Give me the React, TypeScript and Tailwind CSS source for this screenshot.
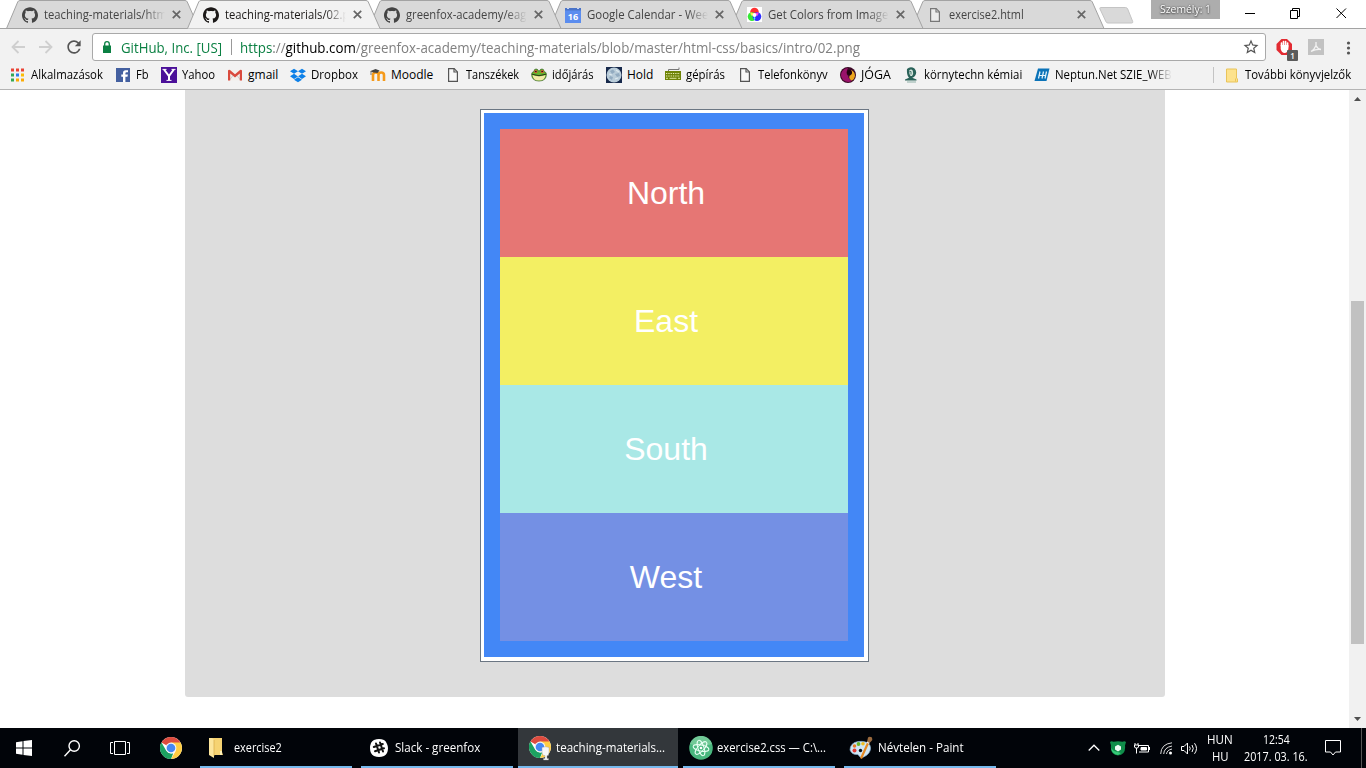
import { useLayoutEffect, useRef, type ReactNode } from "react";
import { SiGithub } from "react-icons/si";
import { FaDropbox } from "react-icons/fa";
import { MdRefresh, MdStarBorder } from "react-icons/md";

/* A single line of text condensed or widened to fill a given width. */
function Line({ w, className = "", children }: { w: number; className?: string; children: ReactNode }) {
  const ref = useRef<HTMLSpanElement>(null);
  useLayoutEffect(() => {
    const el = ref.current;
    if (!el) return;
    el.style.transform = `scaleX(${w / el.offsetWidth})`;
  }, [w]);
  return (
    <span className={`block shrink-0 ${className}`} style={{ width: w }}>
      <span ref={ref} className="inline-block origin-left whitespace-pre">
        {children}
      </span>
    </span>
  );
}

const DocIcon = ({ color = "#555" }: { color?: string }) => (
  <svg width="16" height="16" viewBox="0 0 16 16" fill="#fff" fillOpacity=".5" stroke={color} strokeWidth="1.2">
    <path d="M3.6 1.6h5.6l3.2 3.3v9.5H3.6z" />
    <path d="M9 1.6V5h3.4" fill="none" />
  </svg>
);

const CalendarIcon = () => (
  <svg width="16" height="16" viewBox="0 0 16 16">
    <path d="M0 2h16v14H0z" fill="#5b8def" />
    <path d="M0 1h16v2.500H0z" fill="#4a74c9" />
    <path d="M2 .5h2v1.500H2zM12 .5h2v1.500h-2z" fill="#c7d4ee" />
    <text x="8" y="12.6" textAnchor="middle" fontSize="9" fontWeight="700" fill="#fff" fontFamily="Open Sans, sans-serif">16</text>
  </svg>
);

const ColorsIcon = () => (
  <svg width="15" height="15" viewBox="0 0 15 15" className="ml-px">
    <path d="M0 0h15v15H0z" fill="#fff" />
    <circle cx="7.500" cy="5" r="4.300" fill="#ff3030" />
    <circle cx="5" cy="9.600" r="4.300" fill="#35e835" />
    <circle cx="10" cy="9.600" r="4.300" fill="#3030ff" />
    <path d="M3.300 5.600q2.100-.8 4.200 1.500L4.800 8.900Q3.200 7.400 3.300 5.600z" fill="#ffe94a" />
    <path d="M11.700 5.600q-2.100-.8-4.200 1.500l2.700 1.800q1.600-1.500 1.500-3.300z" fill="#ff40e8" />
    <path d="M7.500 9.500q1.800 1.800 0 3.700-1.800-1.900 0-3.700z" fill="#40f0ff" />
    <circle cx="7.500" cy="8" r="2" fill="#fff" />
  </svg>
);

const tabs = [
  { icon: <SiGithub size={16} />, title: "teaching-materials/htm", w: 123 },
  { icon: <SiGithub size={16} />, title: "teaching-materials/02.p", w: 124, active: true },
  { icon: <SiGithub size={16} />, title: "greenfox-academy/eag", w: 120 },
  { icon: <CalendarIcon />, title: "Google Calendar - Wee", w: 121 },
  { icon: <ColorsIcon />, title: "Get Colors from Image", w: 120 },
  { icon: <DocIcon color="#777" />, title: "exercise2.html", w: 75 },
];
const layers = ["z-[6]", "z-[10]", "z-[5]", "z-[4]", "z-[3]", "z-[2]"];

function Tab({ index }: { index: number }) {
  const t = tabs[index];
  return (
    <div className={`relative h-[29px] w-[181px] shrink-0 ${layers[index]}`}>
      <svg className="absolute left-0 top-0" width="194" height="29" viewBox="0 0 194 29">
        <path d="M.5 28.500L11.700 2Q12.300 .5 14 .5H179Q180.700 .5 181.300 2L193 28.500z" fill={t.active ? "#f2f2f2" : "#d9d9d9"} />
        <path d="M.5 28.500L11.700 2Q12.300 .5 14 .5H179Q180.700 .5 181.300 2L193 28.500" fill="none" stroke="#a3a3a3" />
        {!t.active && <path d="M0 28.500H194" stroke="#a3a3a3" />}
      </svg>
      <div className={`relative flex h-[29px] items-center pl-4 ${t.active ? "text-[#1b1817]" : "text-[#444]"}`}>
        <span className="flex w-[22px] shrink-0">{t.icon}</span>
        <span
          className={`flex w-[121px] overflow-hidden ${
            index === 5 ? "" : "[mask-image:linear-gradient(to_right,#000_100px,transparent_121px)]"
          }`}
        >
          <Line w={t.w}>{t.title}</Line>
        </span>
        <svg className="ml-[7px] shrink-0" width="9" height="9" viewBox="0 0 9 9" stroke="#666" strokeWidth="1.700">
          <path d="M.8.8l7.400 7.400M8.200.8L.8 8.200" />
        </svg>
      </div>
    </div>
  );
}

const AppsIcon = () => (
  <svg width="16" height="16" viewBox="0 0 16 16">
    <path d="M1 1.500h3v3H1zM6 1.500h3v3H6zM11 1.500h3v3h-3z" fill="#ea4335" />
    <path d="M1 6.500h3v3H1z" fill="#34a853" />
    <path d="M6 6.500h3v3H6z" fill="#2f7de9" />
    <path d="M11 6.500h3v3h-3z" fill="#fbbc05" />
    <path d="M1 11.500h3v3H1z" fill="#34a853" />
    <path d="M6 11.500h3v3H6zM11 11.500h3v3h-3z" fill="#fbab05" />
  </svg>
);
const FacebookIcon = () => (
  <svg width="16" height="16" viewBox="0 0 16 16">
    <path d="M1 1h14v14H1z" fill="#4460a0" />
    <path d="M8 15V9.700H6.300V7.500H8V6q0-2.800 2.700-2.800H13v2.100h-1.500q-1.100 0-1.100 1v1.200h2.500l-.4 2.200h-2.100V15z" fill="#fff" />
  </svg>
);
const YahooIcon = () => (
  <svg width="16" height="16" viewBox="0 0 16 16">
    <path d="M0 0h16v16H0z" fill="#4b1099" />
    <path d="M3 2.500l5 6.500 4.800-6.500M8 8.500V13" stroke="#fff" strokeWidth="2" fill="none" />
    <path d="M1.500 2.400h4M10.500 2.400h4M5.500 13.400h5" stroke="#fff" strokeWidth="1" />
  </svg>
);
const GmailIcon = () => (
  <svg width="16" height="16" viewBox="0 0 16 16">
    <path d="M2 3h12v10.500H2z" fill="#f3f0ec" />
    <path d="M2.500 13L6 8.500M13.500 13L10 8.500" stroke="#ccc" />
    <path d="M1 3.500v10h2.200V6.500L8 10.500l4.800-4v7H15v-10q-.8-1.200-2-.4L8 7.300 3 3.100q-1.200-.8-2 .4z" fill="#d94a3d" />
  </svg>
);
const MoodleIcon = () => (
  <svg width="16" height="16" viewBox="0 0 16 16">
    <path d="M3 14V8q0-2.500 2.800-2.500T8.500 8v6M8.500 8q0-2.500 2.700-2.500T14 8v6" fill="none" stroke="#f59a1b" strokeWidth="2.600" />
    <path d="M0 4.300L5.500 2l4 1.600-2 2.400-4-.6z" fill="#444" />
    <path d="M1 4.500v3.500" stroke="#555" strokeWidth=".8" />
  </svg>
);
const FrogIcon = () => (
  <svg width="16" height="16" viewBox="0 0 16 16">
    <path d="M.6 7Q.8 5 3 4.500 3 2 5 2t2.500 2h1Q9 2 11 2t2 2.500q2.200.5 2.400 2.500 0 7-7.400 7T.6 7z" fill="#66b52d" stroke="#315c18" strokeWidth=".7" />
    <path d="M1.500 8q6.500 2.600 13 0-.5 5.500-6.500 5.500T1.500 8z" fill="#f4eaa8" />
    <path d="M1 7.200q7 3 14 0" stroke="#2c3819" fill="none" />
    <circle cx="4.800" cy="4.500" r="1.500" fill="#e34b2c" />
    <circle cx="11.200" cy="4.500" r="1.500" fill="#e34b2c" />
    <path d="M4 4.500h1.600M10.400 4.500H12" stroke="#222" />
  </svg>
);
const MoonIcon = () => (
  <svg width="16" height="16" viewBox="0 0 16 16">
    <path d="M0 0h16v16H0z" fill="#17294b" />
    <circle cx="8" cy="8" r="7.500" fill="#b9ccd9" />
    <path d="M4 4l3-1.500L9 5 6 7zM9 7l4-1 1 3-3 1zM4 9l3 1-1 3-3-2z" fill="#92abc0" />
    <path d="M10 3l3 2M3 7l3 1M9 12l3-1" stroke="#dce8ee" strokeWidth="1.200" />
  </svg>
);
const KeyboardIcon = () => (
  <svg width="16" height="16" viewBox="0 0 16 16">
    <path d="M3.500 4V2.500H14V.5" fill="none" stroke="#777" />
    <path d="M0 4h16v9H0z" fill="#6f8407" />
    <path d="M1 6.500h14M1 9h14" stroke="#e8eeb5" strokeWidth="1.200" strokeDasharray="1.300 1" />
    <path d="M1 11.300h2M4.500 11.300h7M13 11.300h2" stroke="#dfe89e" />
  </svg>
);
const YogaIcon = () => (
  <svg width="16" height="16" viewBox="0 0 16 16">
    <circle cx="8" cy="8" r="8" fill="#3b0926" />
    <path d="M8 1a7 7 0 104 12.800Q8 12 8.200 9 5 6.500 8 1z" fill="#9a126b" />
    <path d="M11 3q4 1.500 4 6-1 4-3.500 4.500-3-2-2-4.500 3-2 1.500-6z" fill="#eca51d" />
    <circle cx="9.500" cy="5.500" r="2.500" fill="#21040f" />
  </svg>
);
const ChemIcon = () => (
  <svg width="16" height="16" viewBox="0 0 16 16">
    <path d="M4 2q3.500-3 7.500-.5 3 3.500.7 7-1 2-3 2.300l4.300 1.700v1H2v-1l4-1.700Q3.500 8.500 4 2z" fill="#2a6259" />
    <path d="M6.200 3.500q2-2 3.600.2 1 3-.8 5.300H7.500Q6 7 6.200 3.500z" fill="#d7e6df" />
    <path d="M4 15h9" stroke="#8fb0a8" />
    <path d="M6.500 4.500h1.500v3" stroke="#47786e" fill="none" />
  </svg>
);
const NeptunIcon = () => (
  <svg width="16" height="16" viewBox="0 0 16 16">
    <path d="M4 1.500h11.500L12.500 14H.5z" fill="#0b73b8" />
    <path d="M4.500 11.500l1.500-7M8 11.500l1.500-7M11 11.500l1.500-7M5.500 8.500h6" stroke="#e4f4fc" strokeWidth="1.200" fill="none" />
  </svg>
);

const bookmarks: { icon: ReactNode; label: string; w: number; cell: string }[] = [
  { icon: <AppsIcon />, label: "Alkalmazások", w: 72, cell: "w-[105px]" },
  { icon: <FacebookIcon />, label: "Fb", w: 13, cell: "w-[46px]" },
  { icon: <YahooIcon />, label: "Yahoo", w: 33, cell: "w-[66px]" },
  { icon: <GmailIcon />, label: "gmail", w: 30, cell: "w-[63px]" },
  { icon: <FaDropbox size={17} color="#0d80e8" />, label: "Dropbox", w: 47, cell: "w-20" },
  { icon: <MoodleIcon />, label: "Moodle", w: 42, cell: "w-[75px]" },
  { icon: <DocIcon />, label: "Tanszékek", w: 53, cell: "w-[86px]" },
  { icon: <FrogIcon />, label: "időjárás", w: 42, cell: "w-[75px]" },
  { icon: <MoonIcon />, label: "Hold", w: 26, cell: "w-[59px]" },
  { icon: <KeyboardIcon />, label: "gépírás", w: 39, cell: "w-[72px]" },
  { icon: <DocIcon />, label: "Telefonkönyv", w: 70, cell: "w-[103px]" },
  { icon: <YogaIcon />, label: "JÓGA", w: 30, cell: "w-[63px]" },
  { icon: <ChemIcon />, label: "környtechn kémiai", w: 98, cell: "w-[131px]" },
  {
    icon: <NeptunIcon />,
    label: "Neptun.Net SZIE_WEB",
    w: 117,
    cell: "w-[138px] overflow-hidden [mask-image:linear-gradient(to_right,#000_116px,transparent_138px)]",
  },
];

const ChromeIcon = () => (
  <svg width="22" height="22" viewBox="0 0 22 22">
    <circle cx="11" cy="11" r="11" fill="#fff" />
    <path d="M11 11L1.470 5.500A11 11 0 0120.500 5.500z" fill="#dd4b3e" />
    <path d="M11 5.500h9.500A11 11 0 0111 22l4.800-8.200z" fill="#ffcd41" />
    <path d="M1.470 5.500l4.800 8.300q2 3.300 7 2.400L11 22A11 11 0 011.470 5.500z" fill="#1ca261" />
    <circle cx="11" cy="11" r="5.400" fill="#f4f4f4" />
    <circle cx="11" cy="11" r="4.300" fill="#4587f3" />
  </svg>
);
const FolderIcon = () => (
  <svg width="14" height="20" viewBox="0 0 14 20">
    <path d="M3 0h10v14l1 3H3z" fill="#f6d372" />
    <path d="M0 0h3l2 2v18l-5-3z" fill="#fce59b" />
    <path d="M5 2v16" stroke="#d6a945" strokeWidth=".7" />
    <path d="M11 13h2v4h-2z" fill="#fff0b5" />
  </svg>
);
const SlackIcon = () => (
  <svg width="18" height="18" viewBox="0 0 18 18">
    <path d="M4 1Q9-1 14 1q2 1 3 4 2 4 0 9-1 2-3 3-5 2-10 0-2-1-3-3-2-5 0-10 1-2 3-3z" fill="#fff" />
    <path d="M6 4.500l3 9M10 3.500l3 9M3.800 8l9-3M5 12.300l9-3" stroke="#111" strokeWidth="2" strokeLinecap="round" />
  </svg>
);
const ChromeProfileIcon = () => (
  <svg width="24" height="26" viewBox="0 0 24 26">
    <g transform="translate(1 1)">
      <ChromeIcon />
    </g>
    <path d="M14 12.500q3.500-1.500 7 0 .5 5-.7 8h-1.300v3h1.500v1.500h-5v-1.500H17v-3h-1.800q-1.700-3-1.200-8z" fill="#f7f7f7" stroke="#999" strokeWidth=".4" />
  </svg>
);
const AtomIcon = () => (
  <svg width="24" height="24" viewBox="0 0 24 24">
    <circle cx="12" cy="12" r="11.800" fill="#49b77e" />
    <path d="M1 8a11.500 11.500 0 0122 0q-10 4-22 0z" fill="#71c997" />
    <g fill="none" stroke="#e9fff4" strokeWidth="1">
      <ellipse cx="12" cy="12" rx="8" ry="3" transform="rotate(12 12 12)" />
      <ellipse cx="12" cy="12" rx="8" ry="3" transform="rotate(72 12 12)" />
      <ellipse cx="12" cy="12" rx="8" ry="3" transform="rotate(132 12 12)" />
    </g>
    <circle cx="12" cy="12" r="1.300" fill="#fff" />
  </svg>
);
const PaintIcon = () => (
  <svg width="24" height="24" viewBox="0 0 24 24">
    <path d="M1 14Q1 7 9 5.500q9-1 12 4 2 5-3 9.500-4 3.500-7 2-1-2-2.500-2.500Q3 19 1 14z" fill="#cfe6f6" stroke="#7fa7c9" strokeWidth=".7" />
    <circle cx="5.500" cy="14.500" r="2" fill="#e23b35" />
    <circle cx="5.500" cy="10" r="1.800" fill="#e77b28" />
    <circle cx="9.500" cy="8" r="1.900" fill="#69b52c" />
    <circle cx="14" cy="7.800" r="1.800" fill="#f0bd20" />
    <circle cx="11.500" cy="14.500" r="1.700" fill="#07101a" />
    <path d="M19.500 6L12 22.500" stroke="#e68a24" strokeWidth="2.200" />
    <path d="M18 6l1-4.500Q20.500 0 23 1.500q1 2-1 4l-2 2z" fill="#9a6a3e" />
    <path d="M17.700 6l2.600 1.500" stroke="#eee" strokeWidth="1.200" />
  </svg>
);

const tasks = [
  { icon: <FolderIcon />, label: "exercise2", w: 48, cell: "w-[152px] mr-[9px]", box: "pl-[9px] w-[34px]" },
  { icon: <SlackIcon />, label: "Slack - greenfox", w: 85, cell: "w-[152px] mr-[5px]", box: "pl-[9px] w-[34px]" },
  { icon: <ChromeProfileIcon />, label: "teaching-materials...", w: 109, cell: "w-40 mr-[5px] bg-[#33373b]", box: "pl-[10px] w-[38px]" },
  { icon: <AtomIcon />, label: "exercise2.css — C:\\...", w: 109, cell: "w-[152px] mr-[9px]", box: "pl-[6px] w-[34px]" },
  { icon: <PaintIcon />, label: "Névtelen - Paint", w: 86, cell: "w-[152px]", box: "pl-[5px] w-[34px]" },
];

const directions = [
  { name: "North", color: "bg-[#e67674]" },
  { name: "East", color: "bg-[#f3ef63]" },
  { name: "South", color: "bg-[#a9e8e6]" },
  { name: "West", color: "bg-[#7490e4]" },
];

function TabStrip() {
  return (
    <div className="relative flex h-[29px] bg-white pl-[6px]">
      <div className="absolute inset-x-0 bottom-0 h-px bg-[#a3a3a3]" />
      {tabs.map((t, i) => (
        <Tab key={i} index={i} />
      ))}
      <svg className="ml-[7px] mt-[6px] shrink-0" width="36" height="18" viewBox="0 0 36 18">
        <path d="M1.500 1.500h25q1.500 0 2.200 1.500l5 12.500q.5 1.500-1 1.500H9q-1.500 0-2-1.200L1 3q-.5-1.500.5-1.500z" fill="#d9d9d9" stroke="#c4c4c4" />
      </svg>
      <div className="ml-4 flex h-[19px] w-[69px] shrink-0 justify-center bg-[#adadad] pt-px text-[11px] leading-4 text-white [text-shadow:0_0_2px_#444,0_1px_2px_#444]">
        <Line w={51}>Személy: 1</Line>
      </div>
      <svg className="ml-[25px] mt-2 shrink-0" width="104" height="12" viewBox="0 0 104 12" fill="none" stroke="#000">
        <path d="M0 5.500h10M45.500 2.500h7v8h-7zM47.500 2.500v-2h7v8h-2M91.500 .5l9.500 9.500M101 .5L91.500 10" />
      </svg>
    </div>
  );
}

function Toolbar() {
  return (
    <div className="flex h-8 items-start pl-[11px] pt-1">
      <svg className="mt-[7px] shrink-0" width="44" height="14" viewBox="0 0 44 14" fill="none" stroke="#cfcfcf" strokeWidth="1.800">
        <path d="M14 7H1.500M7.500 1l-6 6 6 6M28 7h12.500M34.500 1l6 6-6 6" />
      </svg>
      <MdRefresh className="ml-[9px] mt-[4px] shrink-0" size={20} color="#555" />
      <div className="ml-[8px] flex h-[28px] w-[1174px] shrink-0 items-center rounded-[3px] border border-[#a9a9a9] bg-white pl-[10px] text-[14px]">
        <svg width="8" height="12" viewBox="0 0 8 12" className="mb-px shrink-0">
          <path d="M0 4.500h8V12H0z" fill="#0b8043" />
          <path d="M1.700 5V3a2.300 2.300 0 014.600 0v2" fill="none" stroke="#0b8043" strokeWidth="1.300" />
        </svg>
        <span className="ml-[10px] flex w-[110px] shrink-0 text-[#0b8043]">
          <Line w={101}>GitHub, Inc. [US]</Line>
        </span>
        <span className="h-4 w-px bg-[#999]" />
        <Line w={620} className="ml-2 text-[#808080]">
          <span className="text-[#0b8043]">https</span>://<span className="text-black">github.com</span>
          /greenfox-academy/teaching-materials/blob/master/html-css/basics/intro/02.png
        </Line>
        <MdStarBorder className="ml-auto mr-[5px] shrink-0" size={18} color="#555" />
      </div>
      <svg className="ml-[9px] mt-[5px] shrink-0" width="24" height="24" viewBox="0 0 24 24">
        <path d="M6.500 1h5.500l5 5v6l-4 5H6.500l-5-5V6z" fill="#e22b32" />
        <path d="M6.500 8V5M8.500 8V3.500M10.600 8V3.500M12.600 9V5" stroke="#fff" strokeWidth="1.600" strokeLinecap="round" />
        <path d="M5.700 7h7.700v4q-1 4-3.800 4t-3.900-4z" fill="#fff" />
        <rect x="12" y="12" width="11" height="11" rx="1" fill="#5b5b5b" />
        <text x="17.500" y="20.700" fontSize="8" fontWeight="600" textAnchor="middle" fill="#fff" fontFamily="Open Sans, sans-serif">1</text>
      </svg>
      <svg className="ml-[9px] mt-[6px] shrink-0" width="16" height="16" viewBox="0 0 16 16">
        <path d="M0 0h16v16H0z" fill="#c2c2c2" />
        <path d="M3 12.500Q6.500 10.500 8 6.500V3M8 6.500q1.500 3.500 5 4-5-.7-10 2" fill="none" stroke="#f3f3f3" strokeWidth="1.300" />
      </svg>
      <svg className="ml-[22px] mt-[8px] shrink-0" width="5" height="14" viewBox="0 0 5 14" fill="#555">
        <circle cx="2.500" cy="2" r="1.600" />
        <circle cx="2.500" cy="7" r="1.600" />
        <circle cx="2.500" cy="12" r="1.600" />
      </svg>
    </div>
  );
}

function BookmarksBar() {
  return (
    <div className="flex h-[29px] items-center border-b border-[#b4b4b4] pl-[10px] text-black">
      {bookmarks.map((b) => (
        <div key={b.label} className={`flex shrink-0 items-center gap-[5px] ${b.cell}`}>
          <span className="flex w-4 shrink-0">{b.icon}</span>
          <Line w={b.w}>{b.label}</Line>
        </div>
      ))}
      <div className="ml-[41px] h-4 w-px shrink-0 bg-[#c4c4c4]" />
      <svg className="ml-3 shrink-0" width="12" height="15" viewBox="0 0 12 15">
        <path d="M.5 1h10v9l1 1v3H.5z" fill="#fde28c" stroke="#e9c45b" />
        <path d="M9.500 10.500v3" stroke="#e9c45b" />
      </svg>
      <Line w={106} className="ml-[7px]">További könyvjelzők</Line>
    </div>
  );
}

function Page() {
  return (
    <div className="flex h-[638px] bg-white">
      <main className="flex-1 pl-[185px]">
        <div className="h-[607px] w-[980px] rounded-b-[3px] bg-[#ddd] pl-[295px] pt-[19px]">
          <div className="w-[389px] border border-[#6b7683] bg-white p-[3px] pb-1">
            <div className="w-[380px] bg-[#4387f6] p-4">
              {directions.map((d) => (
                <div
                  key={d.name}
                  className={`flex h-32 items-center justify-center pr-4 font-['Liberation_Sans',Arial,sans-serif] text-[32px] text-white ${d.color}`}
                >
                  {d.name}
                </div>
              ))}
            </div>
          </div>
        </div>
      </main>
      <div className="flex w-[17px] flex-col items-center bg-[#f1f1f1]">
        <svg width="17" height="17" viewBox="0 0 17 17" className="shrink-0">
          <path d="M5 11l3.500-4 3.500 4z" fill="#505050" />
        </svg>
        <div className="mt-[194px] h-[343px] w-[13px] shrink-0 bg-[#c1c1c1]" />
        <svg width="17" height="17" viewBox="0 0 17 17" className="mb-px mt-auto shrink-0">
          <path d="M5 7l3.500 4L12 7z" fill="#505050" />
        </svg>
      </div>
    </div>
  );
}

function Taskbar() {
  return (
    <div className="flex h-10 bg-[#010409] text-white">
      <div className="flex w-[200px] shrink-0 items-center">
        <svg className="ml-4 shrink-0" width="16" height="16" viewBox="0 0 16 16" fill="#fff">
          <path d="M0 2.200l6.500-.9v6.200H0zM7.500 1.100L16 0v7.500H7.500zM0 8.500h6.500v6.200L0 13.800zM7.500 8.500H16V16l-8.500-1.100z" />
        </svg>
        <svg className="ml-8 shrink-0" width="17" height="17" viewBox="0 0 17 17" fill="none" stroke="#fff" strokeWidth="1.400">
          <circle cx="10.200" cy="6" r="5.200" />
          <path d="M6.500 9.800L.5 16.200" />
        </svg>
        <svg className="ml-[29px] shrink-0" width="20" height="14" viewBox="0 0 20 14" fill="none" stroke="#fff">
          <path d="M4.500.5h11v13h-11zM3 1.500H.5v11H3M17 1.500h2.500v11H17" />
        </svg>
        <span className="ml-[30px]">
          <ChromeIcon />
        </span>
      </div>
      {tasks.map((t) => (
        <div key={t.label} className={`flex h-10 shrink-0 items-center border-b-2 border-[#76b9ed] pt-[2px] ${t.cell}`}>
          <span className={`flex shrink-0 ${t.box}`}>{t.icon}</span>
          <Line w={t.w}>{t.label}</Line>
        </div>
      ))}
      <div className="flex flex-1 items-center pl-[92px]">
        <svg width="12" height="8" viewBox="0 0 12 8" fill="none" stroke="#fff" strokeWidth="1.300" className="shrink-0">
          <path d="M.7 6.500L6 1.200l5.300 5.300" />
        </svg>
        <svg width="16" height="15" viewBox="0 0 16 15" className="ml-[10px] shrink-0">
          <path d="M0 1q1.500-1.500 3.500-.2 4.500-1.300 9 0Q14.500-.5 16 1l-1 3.500q1 9-7 10-8-1-7-10z" fill="#108d4a" />
          <path d="M1 7q1 6 7 7l3-2-7-2z" fill="#36c977" />
          <path d="M8 3.800l3 1.600v3L8 10.500 5 8.500v-3z" fill="#eefaf4" />
        </svg>
        <svg width="16" height="12" viewBox="0 0 16 12" className="ml-[8px] shrink-0" fill="none" stroke="#fff">
          <path d="M4 3.500h10.500v6.500H5M15.500 5v3M1 1v2M4 1v2M.5 3h4v2q0 1-2 1t-2-1zM2.500 6v5.500" />
          <path d="M7 5.500h5.500v2.500H7z" fill="#fff" />
        </svg>
        <svg width="13" height="13" viewBox="0 0 13 13" className="ml-[10px] mt-px shrink-0" fill="none" stroke="#ddd">
          <path d="M.7 12Q1 2 12 .8M3.700 12Q4 5.500 12 4M6.500 12Q7 8 12 7" />
          <circle cx="10.500" cy="11" r="1.500" fill="#fff" stroke="none" />
        </svg>
        <svg width="17" height="13" viewBox="0 0 17 13" className="ml-[8px] shrink-0" fill="none" stroke="#fff">
          <path d="M.5 4.500h2.500L6.500 1v11L3 8.500H.5zM8.500 4.500q1.500 2 0 4M11 3q2.500 3.500 0 7M13.500 1.200q4 5.300 0 10.600" />
        </svg>
        <div className="ml-[8px] flex w-7 shrink-0 flex-col items-center leading-[17px]">
          <Line w={26}>HUN</Line>
          <Line w={17}>HU</Line>
        </div>
        <div className="ml-[9px] flex w-[66px] shrink-0 flex-col items-center leading-[17px]">
          <Line w={27}>12:54</Line>
          <Line w={64}>2017. 03. 16.</Line>
        </div>
        <svg width="16" height="16" viewBox="0 0 16 16" className="ml-[16px] shrink-0" fill="none" stroke="#fff">
          <path d="M.5.5h15v11.500h-5l-2.500 3-2.500-3h-5z" />
        </svg>
        <div className="ml-[20px] h-10 w-px shrink-0 bg-[#555]" />
      </div>
    </div>
  );
}

export default function App() {
  return (
    <div className="flex h-[768px] w-[1366px] flex-col overflow-hidden bg-[#f2f2f2] font-['Open_Sans','Noto_Sans',sans-serif] text-[12px]">
      <TabStrip />
      <Toolbar />
      <BookmarksBar />
      <Page />
      <Taskbar />
    </div>
  );
}
